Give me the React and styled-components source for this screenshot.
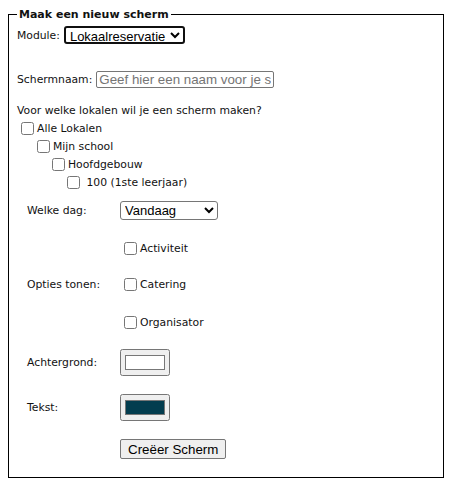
import React from "react";
import styled, { createGlobalStyle } from "styled-components";

const GlobalStyle = createGlobalStyle`
  body {
    margin: 8px;
    background: #fff;
    color: #111;
    font-family: "DejaVu Sans", Verdana, sans-serif;
    font-size: 10.8px;
  }
`;

const Fieldset = styled.fieldset`
  box-sizing: border-box;
  width: 436px;
  margin: 0;
  padding: 0 8px 10px 8px;
  border: 1px solid #000;
  min-inline-size: 0;
`;

const Legend = styled.legend`
  padding: 0 2px;
  margin-left: 0;
  font-weight: bold;
  font-size: 11px;
  line-height: 13px;
`;

const Line = styled.div`
  display: flex;
  align-items: center;
  gap: 4px;
  margin-top: ${(p) => p.$top || 0}px;
`;

const Select = styled.select`
  box-sizing: border-box;
  width: ${(p) => p.$w}px;
  height: ${(p) => p.$h}px;
  padding: 0;
  font-family: "Liberation Sans", Arial, sans-serif;
  font-size: 13px;
  line-height: 14px;
  color: #000;
  background: #fff;
  border: ${(p) => (p.$focus ? "2px solid #101010" : "1px solid #767676")};
  border-radius: 3px;
`;

const TextInput = styled.input`
  box-sizing: border-box;
  width: 178px;
  height: 17px;
  padding: 0 2px;
  font-family: "Liberation Sans", Arial, sans-serif;
  font-size: 13.33px;
  border: 1px solid #767676;
  border-radius: 2px;
  &::placeholder {
    color: #757575;
  }
`;

const Question = styled.div`
  margin-top: 16px;
  line-height: 13px;
`;

const Tree = styled.div`
  margin-top: 2px;
`;

const TreeItem = styled.label`
  display: flex;
  align-items: center;
  height: 18px;
  padding-left: ${(p) => p.$indent}px;
  white-space: pre;
`;

const Check = styled.input`
  width: 13px;
  height: 13px;
  margin: 0 3px 0 4px;
`;

const OptionsGrid = styled.div`
  display: grid;
  grid-template-columns: 93px auto;
  padding-left: 10px;
`;

const Row = styled.div`
  display: contents;
`;

const Cell = styled.div`
  display: flex;
  align-items: center;
  height: ${(p) => p.$h}px;
`;

const ColorInput = styled.input`
  box-sizing: border-box;
  width: 50px;
  height: 27px;
  margin: 0;
`;

const Button = styled.button`
  box-sizing: border-box;
  height: 20px;
  padding: 0 7px;
  font-family: "Liberation Sans", Arial, sans-serif;
  font-size: 13.33px;
  color: #000;
  background: #efefef;
  border: 1px solid #767676;
  border-radius: 2px;
`;

const tree = [
  { label: "Alle Lokalen", indent: 0 },
  { label: "Mijn school", indent: 16 },
  { label: "Hoofdgebouw", indent: 31 },
  { label: " 100 (1ste leerjaar)", indent: 46 },
];

const options = [
  { label: "", h: 36, box: "Activiteit" },
  { label: "Opties tonen:", h: 37, box: "Catering" },
  { label: "", h: 38, box: "Organisator" },
];

export default function App() {
  return (
    <>
      <GlobalStyle />
      <Fieldset>
        <Legend>Maak een nieuw scherm</Legend>
        <Line $top={5}>
          <span>Module:</span>
          <Select $w={121} $h={18} $focus defaultValue="lok">
            <option value="lok">Lokaalreservatie</option>
          </Select>
        </Line>
        <Line $top={27}>
          <span>Schermnaam:</span>
          <TextInput type="text" placeholder="Geef hier een naam voor je scherm" />
        </Line>
        <Question>Voor welke lokalen wil je een scherm maken?</Question>
        <Tree>
          {tree.map((t) => (
            <TreeItem key={t.label} $indent={t.indent}>
              <Check type="checkbox" />
              {t.label}
            </TreeItem>
          ))}
        </Tree>
        <OptionsGrid>
          <Row>
            <Cell $h={39}>Welke dag:</Cell>
            <Cell $h={39}>
              <Select $w={98} $h={19} defaultValue="today">
                <option value="today">Vandaag</option>
              </Select>
            </Cell>
          </Row>
          {options.map((o) => (
            <Row key={o.box}>
              <Cell $h={o.h}>{o.label}</Cell>
              <Cell $h={o.h}>
                <Check type="checkbox" />
                {o.box}
              </Cell>
            </Row>
          ))}
          <Row>
            <Cell $h={42}>Achtergrond:</Cell>
            <Cell $h={42}>
              <ColorInput type="color" defaultValue="#ffffff" />
            </Cell>
          </Row>
          <Row>
            <Cell $h={48}>Tekst:</Cell>
            <Cell $h={48}>
              <ColorInput type="color" defaultValue="#033d4f" />
            </Cell>
          </Row>
          <Row>
            <Cell $h={36} />
            <Cell $h={36}>
              <Button type="button">Creëer Scherm</Button>
            </Cell>
          </Row>
        </OptionsGrid>
      </Fieldset>
    </>
  );
}
